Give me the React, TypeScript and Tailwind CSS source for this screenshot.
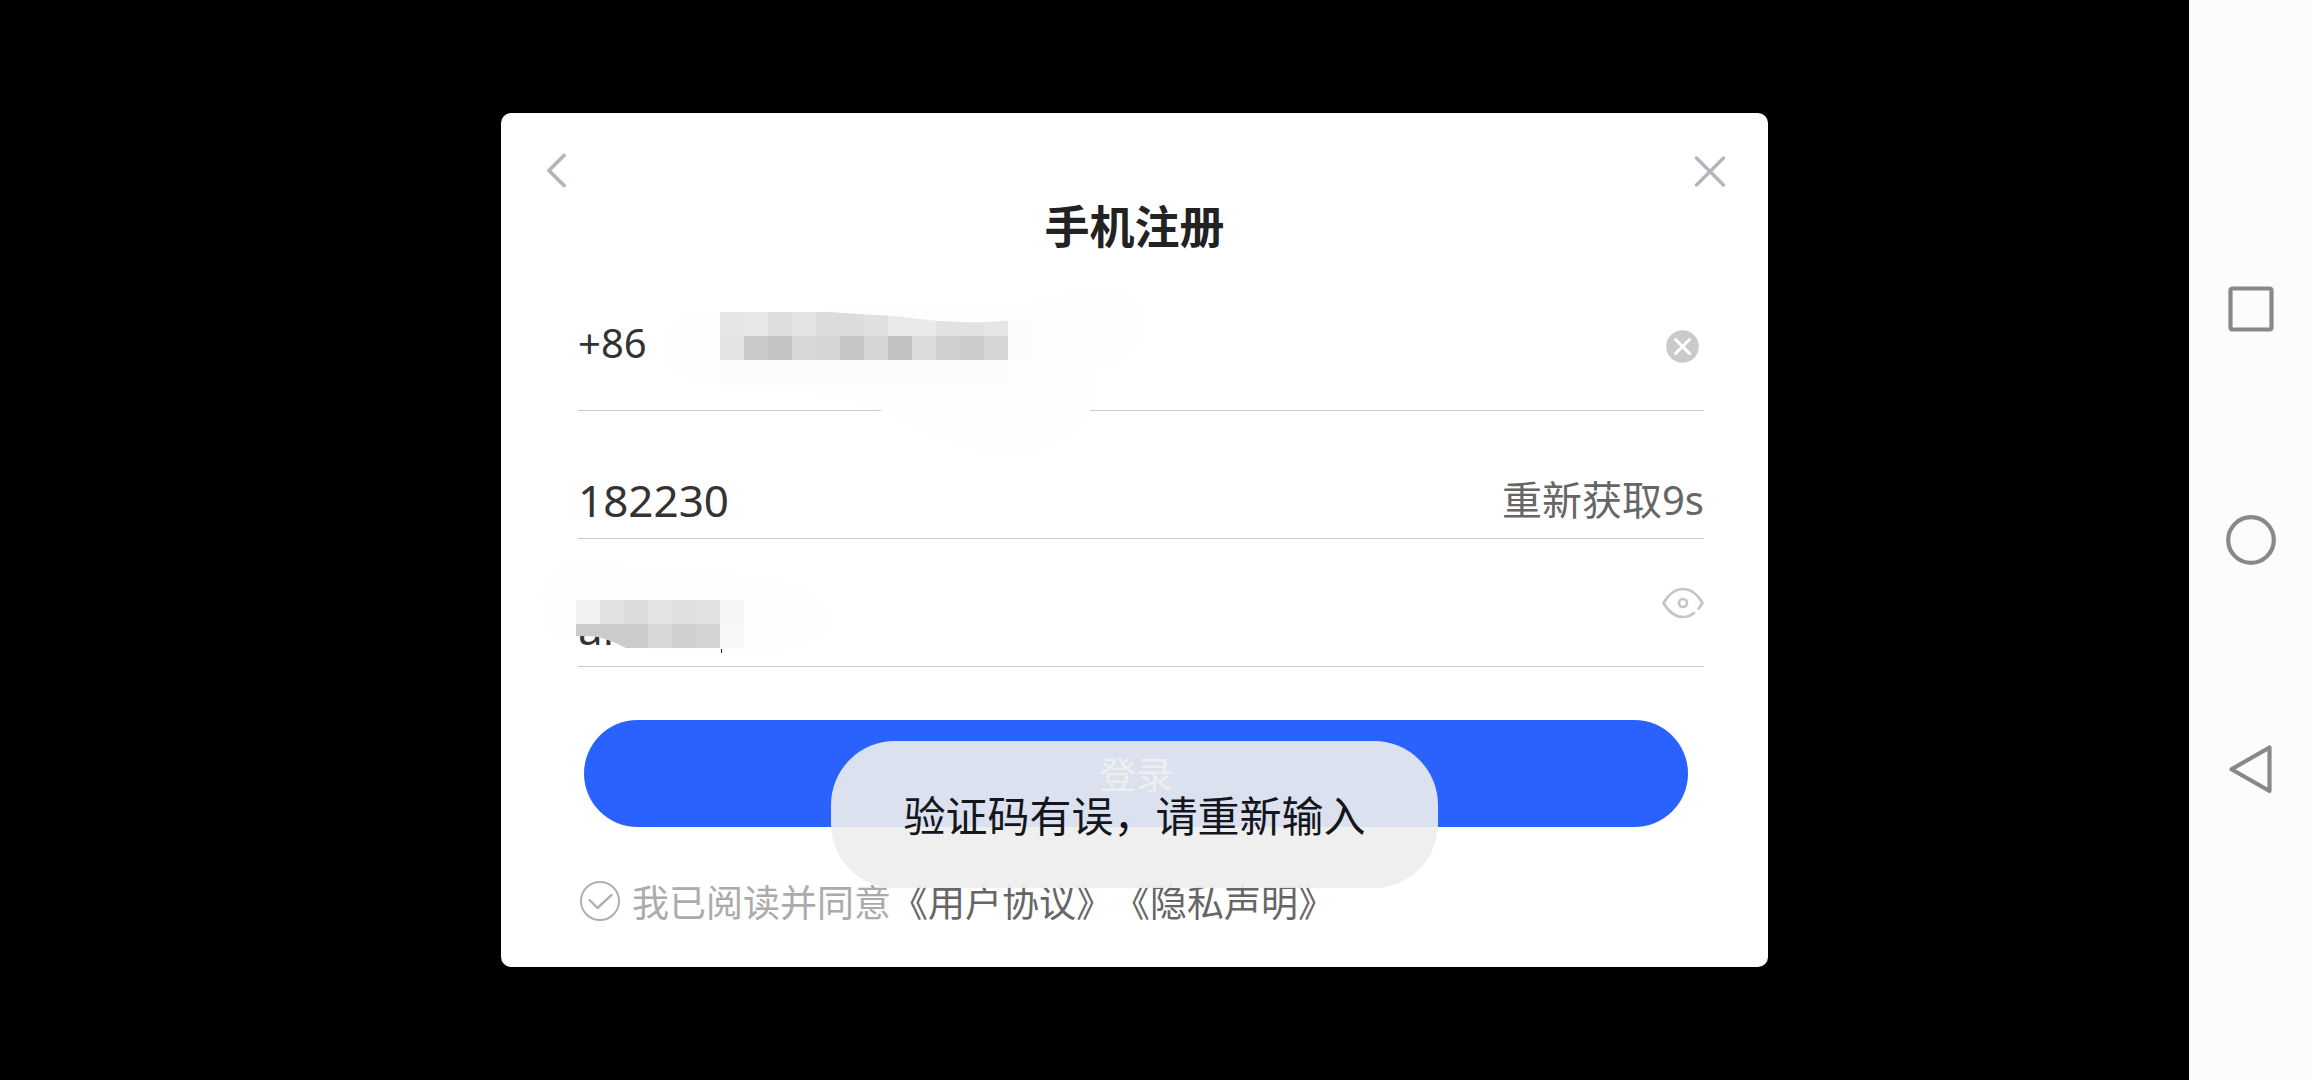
import { useState } from "react";

const App = () => {
  return (
    <div className="flex min-h-screen bg-black font-['Noto_Sans','Noto_Sans_CJK_SC',sans-serif]">
      <main className="relative flex flex-1 items-center justify-center pl-20">
        <RegisterCard />
        <Toast message="验证码有误，请重新输入" />
      </main>
      <SystemNav />
    </div>
  );
};

const RegisterCard = () => {
  const [code, setCode] = useState("182230");
  const [password, setPassword] = useState("an");
  const [agreed, setAgreed] = useState(true);

  return (
    <section className="w-full max-w-[1267px] rounded-[10px] bg-white pt-10 pb-9">
      <div className="flex h-9 items-center justify-between pr-[42px] pl-[45px]">
        <button type="button" aria-label="返回">
          <BackIcon />
        </button>
        <button type="button" aria-label="关闭">
          <CloseIcon />
        </button>
      </div>

      <h1 className="mt-[10px] text-center text-[45px] leading-[56px] font-bold text-[#222222]">
        手机注册
      </h1>

      <form className="mt-7 pr-16 pl-[77px]">
        {/* Phone number */}
        <div className="relative flex h-32 items-center border-b border-[#cccccc]">
          <label
            htmlFor="phone"
            className="pb-2 text-[40px] leading-[56px] text-[#333333]"
          >
            +86
          </label>
          <input
            id="phone"
            type="tel"
            className="min-w-0 flex-1 bg-transparent pl-6 text-[40px] leading-[56px] outline-none"
          />
          <PhoneMask />
          <button type="button" aria-label="清空" className="pr-1">
            <ClearIcon />
          </button>
        </div>

        {/* Verification code */}
        <div className="flex h-32 items-end border-b border-[#cccccc] pb-[10px]">
          <input
            aria-label="验证码"
            value={code}
            onChange={(e) => setCode(e.target.value)}
            className="h-14 min-w-0 flex-1 bg-transparent text-[44px] leading-[56px] text-[#333333] outline-none"
          />
          <button
            type="button"
            className="text-[40px] leading-[56px] text-[#666666]"
          >
            重新获取9s
          </button>
        </div>

        {/* Password */}
        <div className="relative flex h-32 items-center border-b border-[#cccccc]">
          <input
            aria-label="密码"
            value={password}
            onChange={(e) => setPassword(e.target.value)}
            className="mb-[10px] h-14 min-w-0 flex-1 self-end bg-transparent text-[44px] leading-[56px] text-[#333333] outline-none"
          />
          <PasswordMask />
          <button type="button" aria-label="显示密码">
            <EyeIcon />
          </button>
        </div>

        <div className="mt-[53px] pr-4 pl-[6px]">
          <button
            type="submit"
            className="h-[107px] w-full rounded-full bg-[#2962ff] pt-0.5 text-[37px] leading-[56px] text-white"
          >
            登录
          </button>
        </div>

        <div className="mt-12 flex h-14 items-center pl-0.5 text-[37px] leading-[56px] text-[#666666]">
          <label className="flex items-center gap-3 text-[#ababab]">
            <span className="relative mb-1 size-10">
              <input
                type="checkbox"
                checked={agreed}
                onChange={(e) => setAgreed(e.target.checked)}
                className="peer block size-10 appearance-none rounded-full border-2 border-[#b0b0b2]"
              />
              <svg
                viewBox="0 0 40 40"
                className="pointer-events-none absolute inset-0 hidden size-10 peer-checked:block"
                fill="none"
                stroke="#b0b0b2"
                strokeWidth="2.4"
                strokeLinecap="round"
                strokeLinejoin="round"
              >
                <path d="M9.500 19l8 8L31.500 14" />
              </svg>
            </span>
            我已阅读并同意
          </label>
          <a href="#terms">《用户协议》</a>
          <a href="#privacy">《隐私声明》</a>
        </div>
      </form>
    </section>
  );
};

const Toast = ({ message }: ToastProps) => (
  <div className="pointer-events-none absolute inset-x-0 bottom-48 flex justify-center pl-20">
    <p
      role="status"
      className="rounded-[64px] bg-[#ededed]/91 px-[72px] pt-[43px] pb-[41px] text-[42px] leading-[63px] text-[#14161c]"
    >
      {message}
    </p>
  </div>
);

const SystemNav = () => (
  <nav className="flex w-[123px] flex-col items-center justify-center gap-[180px] bg-[#fcfcfc]">
    <button type="button" aria-label="最近任务">
      <svg viewBox="0 0 50 50" className="size-[50px]" {...navStroke}>
        <rect x="4.5" y="3.5" width="41" height="41" rx="2" />
      </svg>
    </button>
    <button type="button" aria-label="主屏幕">
      <svg viewBox="0 0 50 50" className="size-[50px]" {...navStroke}>
        <circle cx="25" cy="25" r="22.8" />
      </svg>
    </button>
    <button type="button" aria-label="返回上一级">
      <svg viewBox="0 0 50 50" className="size-[50px]" {...navStroke}>
        <path d="M43.5 2.500v43.500L5.500 24.200z" />
      </svg>
    </button>
  </nav>
);

const navStroke = {
  fill: "none",
  stroke: "#888888",
  strokeWidth: 4.2,
  strokeLinejoin: "round" as const,
};

const BackIcon = () => (
  <svg
    viewBox="0 0 22 36"
    className="h-9 w-[22px]"
    fill="none"
    stroke="#b4b4bc"
    strokeWidth="3.800"
    strokeLinecap="round"
    strokeLinejoin="round"
  >
    <path d="M18 2.500L3 17.500l15 15" />
  </svg>
);

const CloseIcon = () => (
  <svg
    viewBox="0 0 32 32"
    className="size-8"
    fill="none"
    stroke="#b4b4bc"
    strokeWidth="3.400"
    strokeLinecap="round"
  >
    <path d="M2.500 3l27 27M29.500 3l-27 27" />
  </svg>
);

const ClearIcon = () => (
  <svg viewBox="0 0 34 34" className="size-[34px]" fill="none">
    <circle cx="16.500" cy="16.500" r="16.300" fill="#cacaca" />
    <path
      d="M9.500 9.500l14 14M23.500 9.500L9.500 23.500"
      stroke="#ffffff"
      strokeWidth="3"
      strokeLinecap="round"
    />
  </svg>
);

const EyeIcon = () => (
  <svg
    viewBox="0 0 42 32"
    className="h-8 w-[42px]"
    fill="none"
    stroke="#c4c4c9"
    strokeWidth="2.700"
    strokeLinecap="round"
    strokeLinejoin="round"
  >
    <path d="M32 26C29 28.500 25 30 21 30 13.500 30 6.500 24.500 1.500 16 6.500 7.500 13.500 2 21 2s14.500 5.500 19.500 14c-1.300 2.300-2.700 4.200-4 5.600" />
    <circle cx="21" cy="16" r="4" />
  </svg>
);

const CELL = 24;

const phoneCells = [
  "#e6e6e6 #e8e8e8 #dddddd #e3e3e3 #dbdbdb #dcdcdc #e0e0e0 #e9e9e9 #eaeaea #e2e2e2 #e1e1e1 #e6e6e6",
  "#e4e4e4 #cacaca #c4c4c4 #d7d7d7 #d5d5d5 #c5c5c5 #d6d6d6 #c2c2c2 #dbdbdb #cfcfcf #cbcbcb #d5d5d5",
  "#fcfcfc #fcfcfc #fcfcfc #fcfcfc #fcfcfc #fcfcfc #fcfcfc #fbfbfb #fcfcfc #fcfcfc #fcfcfc #fcfcfc",
];

const passwordCells = [
  "#f2f2f2 #e2e2e2 #dbdbdb #e4e4e4 #dfdfdf #e1e1e1 #f6f6f6",
  "#cbcbcb #cbcbcb #cccccc #d7d7d7 #d0d0d0 #d3d3d3 #f7f7f7",
];

const Mosaic = ({ rows, x, y }: MosaicProps) => (
  <g shapeRendering="crispEdges">
    {rows.map((row, r) =>
      row
        .split(" ")
        .map((fill, c) => (
          <rect
            key={`${r}-${c}`}
            x={x + c * CELL}
            y={y + r * CELL}
            width={CELL}
            height={CELL}
            fill={fill}
          />
        )),
    )}
  </g>
);

// Smudge plus pixel blocks that hide the phone number
const PhoneMask = () => (
  <svg
    aria-hidden="true"
    viewBox="0 0 500 180"
    className="pointer-events-none absolute top-0 left-20 h-[180px] w-[500px]"
  >
    <path
      d="M5 65C10 30 40 28 62 28L300 34Q380 22 425 5Q484 0 486 42Q485 75 435 88Q442 110 432 128Q410 166 350 173Q290 165 222 127Q140 100 60 103Q10 100 5 65z"
      fill="#fefefe"
    />
    <Mosaic rows={phoneCells} x={62} y={29} />
    <rect x="350" y="37" width="24" height="40" fill="#fbfbfb" />
    <path
      d="M166 28.500L200 31L236 33L275 37.500Q310 40 330 39L350 37.500V27H166z"
      fill="#fefefe"
    />
  </svg>
);

// Leaves the bottom of the first letters and the caret tip showing
const PasswordMask = () => (
  <svg
    aria-hidden="true"
    viewBox="0 0 300 128"
    className="pointer-events-none absolute top-0 -left-9 h-32 w-[300px]"
  >
    <clipPath id="password-smudge">
      <path d="M0 0H300V112H120L84 109Q66 100 56 98Q46 96 0 98z" />
    </clipPath>
    <g clipPath="url(#password-smudge)">
      <path
        d="M0 60Q-2 24 40 21Q75 22 95 34Q200 28 260 48Q292 68 285 90Q270 112 220 112H120L84 109Q66 100 56 98Q46 96 10 96Q2 80 0 60z"
        fill="#fefefe"
      />
      <Mosaic rows={passwordCells} x={34} y={61} />
    </g>
    <path d="M179.500 110v4" stroke="#222222" />
  </svg>
);

type ToastProps = {
  message: string;
};

type MosaicProps = {
  rows: string[];
  x: number;
  y: number;
};

export default App;
